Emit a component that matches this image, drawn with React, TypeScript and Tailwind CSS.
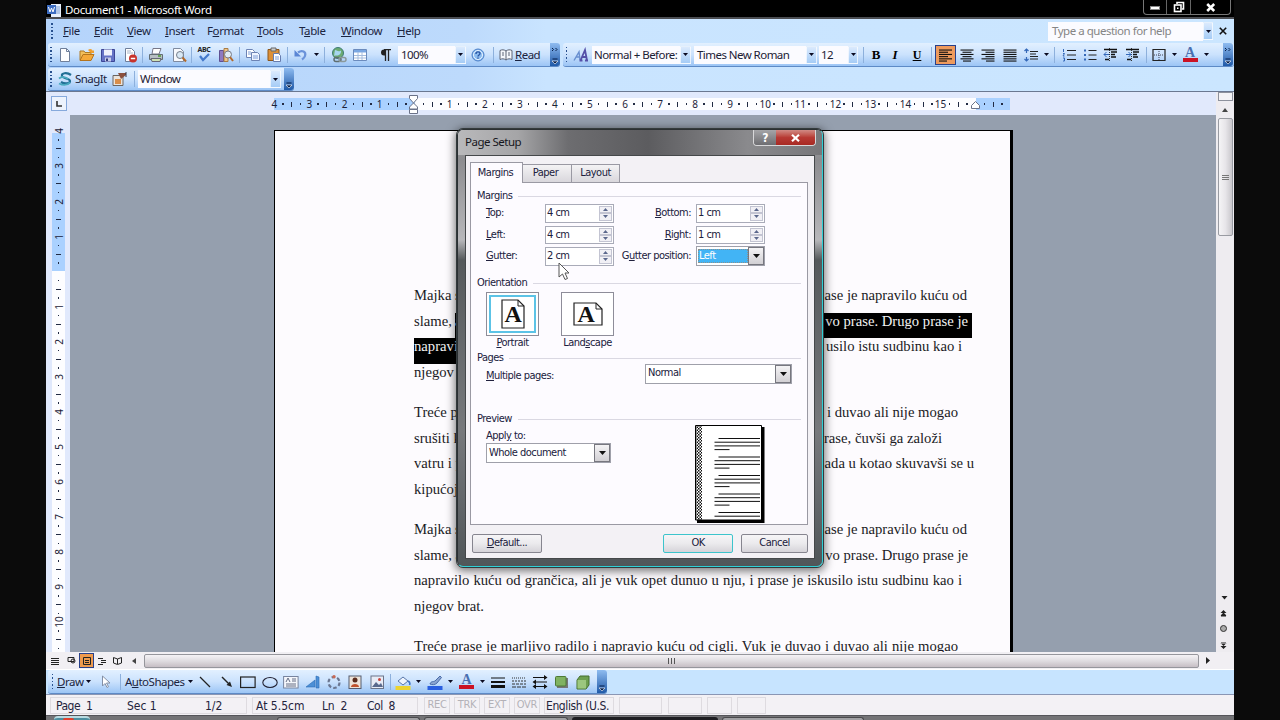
import type { ReactNode } from 'react';

const menus = [
    ['', 'F', 'ile', 'w-[31px]'],
    ['', 'E', 'dit', 'w-[33px]'],
    ['', 'V', 'iew', 'w-[38px]'],
    ['', 'I', 'nsert', 'w-[42px]'],
    ['F', 'o', 'rmat', 'w-[50px]'],
    ['', 'T', 'ools', 'w-[42px]'],
    ['T', 'a', 'ble', 'w-[42px]'],
    ['', 'W', 'indow', 'w-[56px]'],
    ['', 'H', 'elp', 'w-[40px]'],
];

function Cell({ c, children }: { c: string; children?: ReactNode }) {
    return <div className={`flex h-full shrink-0 items-center justify-center ${c}`}>{children}</div>;
}

function Icon({ children }: { children: ReactNode }) {
    return (
        <svg width="16" height="16" viewBox="0 0 16 16" fill="none" className="shrink-0">
            {children}
        </svg>
    );
}

function Sep({ c }: { c: string }) {
    return (
        <Cell c={c}>
            <div className="h-4 w-px bg-[#8db0dc]" />
        </Cell>
    );
}

function Grip({ c }: { c: string }) {
    return (
        <Cell c={c}>
            <div className="flex flex-col gap-[2px]">
                {[0, 1, 2, 3, 4].map((i) => (
                    <div key={i} className="size-[1.5px] bg-[#27508f]" />
                ))}
            </div>
        </Cell>
    );
}

function Down({ c = '' }: { c?: string }) {
    return (
        <Cell c={c}>
            <svg width="5" height="3" viewBox="0 0 5 3">
                <path d="M0 0h5L2.500 3z" fill="#0a0a20" />
            </svg>
        </Cell>
    );
}

function ComboArrow({ c }: { c: string }) {
    return (
        <div className={`flex h-[18px] shrink-0 items-center justify-center border border-white/70 bg-gradient-to-b from-[#dbeafd] to-[#a5ccf6] ${c}`}>
            <svg width="5" height="3" viewBox="0 0 5 3">
                <path d="M0 0h5L2.500 3z" fill="#0a0a20" />
            </svg>
        </div>
    );
}

function Cap({ chevron }: { chevron?: boolean }) {
    return (
        <div className="flex h-full w-[10px] shrink-0 flex-col items-center justify-end rounded-r-[3px] bg-gradient-to-b from-[#8fbcf0] to-[#1f5aa8] pb-[1px]">
            <svg width="8" height="18" viewBox="0 0 8 18" fill="none">
                {chevron && <path d="M1 1l1.500 1.500L1 4M4.500 1L6 2.500 4.500 4" stroke="#061f4a" />}
                <path d="M1.500 12h5" stroke="#061f4a" />
                <path d="M1 14h6l-3 3z" fill="#061f4a" stroke="#fff" strokeWidth=".6" />
            </svg>
        </div>
    );
}

function Lines({ x, w }: { x: number[]; w: number[] }) {
    return (
        <Icon>
            {x.map((v, i) => (
                <rect key={i} x={v} y={2.500 + i * 2.200} width={w[i]} height="1.100" fill="#111" />
            ))}
        </Icon>
    );
}

/* ---------- top bars ---------- */

function TitleBar() {
    return (
        <div className="flex h-[19px] items-start justify-between border-b-2 border-[#4b4d52] bg-black">
            <div className="flex items-center pl-px">
                <svg width="14" height="15" viewBox="0 0 14 15" className="mt-[2px]">
                    <rect x="4" y="1" width="10" height="13" fill="#e8f0fb" />
                    <path d="M7 4h6M7 6h6M7 8h6M7 10h6" stroke="#7d9fd4" />
                    <rect x="0" y="2" width="9" height="9" fill="#3c6cc0" />
                    <path d="M1.500 4l1.500 5 1.500-4L6 9l1.500-5" stroke="#fff" fill="none" />
                </svg>
                <span className="ml-[4px] mt-px text-[11.5px] leading-[17px] tracking-[-0.35px] text-white">Document1 - Microsoft Word</span>
            </div>
            <div className="mr-[3px] flex h-[15px] rounded-b-[4px] border border-t-0 border-[#777] text-white">
                <div className="flex w-[23px] items-end justify-center border-r border-[#666] pb-[4px]">
                    <div className="h-[4px] w-[10px] border border-[#888] bg-white" />
                </div>
                <div className="flex w-[24px] items-center justify-center border-r border-[#666]">
                    <svg width="12" height="12" viewBox="0 0 12 12" fill="none" stroke="#fff" strokeWidth="1.600">
                        <path d="M4 3V1.500h6.500V8H9" />
                        <rect x="1.500" y="4" width="6.500" height="6.500" />
                        <path d="M4 7.300h1.500" />
                    </svg>
                </div>
                <div className="flex w-[39px] items-center justify-center">
                    <svg width="10" height="9" viewBox="0 0 10 9" stroke="#fff" strokeWidth="2.500">
                        <path d="M1.200 1l7 7M8.200 1l-7 7" />
                    </svg>
                </div>
            </div>
        </div>
    );
}

function MenuBar() {
    return (
        <div className="flex h-[24px] items-center pl-[3px]">
            <Grip c="w-[6px] mr-[8px]" />
            {menus.map((m) => (
                <div key={m[1] + m[2]} className={`shrink-0 whitespace-nowrap text-[11.5px] tracking-[-0.4px] text-[#1b2440] ${m[3]}`}>
                    {m[0]}
                    <u className="underline-offset-1">{m[1]}</u>
                    {m[2]}
                </div>
            ))}
            <div className="ml-auto flex h-[19px] w-[155px] items-center bg-[#fbfbff] pl-[4px] text-[11.5px] tracking-[-0.48px] text-[#858585]">Type a question for help</div>
            <ComboArrow c="w-[10px]" />
            <Cell c="w-[20px] mr-px">
                <svg width="8" height="8" viewBox="0 0 8 8" stroke="#111" strokeWidth="1.600">
                    <path d="M.8.8l6.400 6.400M7.200.8L.8 7.200" />
                </svg>
            </Cell>
        </div>
    );
}

const combo = 'flex h-[18px] shrink-0 items-center whitespace-nowrap bg-[#fbfbff] text-[11.5px] tracking-[-0.55px] text-[#1b2034]';

function Toolbars() {
    return (
        <div className="flex h-[25px] items-start gap-[3px] pl-[2px]">
            <div className="flex h-[24px] w-[512px] shrink-0 items-center rounded-[3px] border-b border-[#5d8ac6] bg-gradient-to-b from-[#e2f0ff] via-[#cbe2fd] to-[#9cc5f5]">
                <Grip c="w-[6px]" />
                <Cell c="w-[22px]"><Icon><path d="M3.500 1.500h6l3 3v10h-9z" fill="#fff" stroke="#6f7f9a" /><path d="M9.500 1.500v3h3" stroke="#6f7f9a" /></Icon></Cell>
                <Cell c="w-[21px]"><Icon><path d="M1 13V4h4l1 1.500h6V8" fill="#f3bf5b" stroke="#b07b26" /><path d="M1 13.500L4 7.500h11l-3 6z" fill="#f5a93a" stroke="#b4741d" /><path d="M9 3c2-2 4-1 5 1l1-1v3h-3" fill="#f0a030" /></Icon></Cell>
                <Cell c="w-[22px]"><Icon><path d="M1.500 2.500h13v12h-13z" fill="#6573c6" stroke="#3d4696" /><path d="M4 2.500h8v6H4z" fill="#eef1fc" /><path d="M5 10.500h6v4H5z" fill="#c8cde9" /><path d="M6 11.500h2v2.500H6z" fill="#333e80" /></Icon></Cell>
                <Cell c="w-[22px]"><Icon><path d="M3.500 1.500h6l3 3v10h-9z" fill="#fff" stroke="#6f7f9a" /><path d="M5 4h4M5 6h6" stroke="#a9b5c8" /><circle cx="11" cy="11.500" r="4" fill="#c8322b" /><path d="M8.800 11.500h4.400" stroke="#fff" strokeWidth="1.500" /></Icon></Cell>
                <Sep c="w-[3px]" />
                <Cell c="w-[24px]"><Icon><path d="M5 1.500h8L11 7H4z" fill="#fff" stroke="#778" /><path d="M1.500 7.500h13v5h-13z" fill="#b8c0c4" stroke="#626d72" /><path d="M3 11.500h10l-1 3H4z" fill="#cfe3b5" stroke="#667" /><path d="M10 9h3" stroke="#4c9b32" strokeWidth="1.500" /></Icon></Cell>
                <Cell c="w-[22px]"><Icon><path d="M2.500 1.500h7l3 3v10h-10z" fill="#f7f9fd" stroke="#7f8ba0" /><circle cx="9" cy="8" r="3.500" fill="#d9e8f4" stroke="#767f8c" /><path d="M11.500 10.500l3.500 4" stroke="#b36a2c" strokeWidth="2" /></Icon></Cell>
                <Sep c="w-[3px]" />
                <Cell c="w-[22px]">
                    <div className="flex flex-col items-center">
                        <span className="text-[7px] font-bold leading-[6px] tracking-[-0.3px] text-[#222]">ABC</span>
                        <svg width="12" height="9" viewBox="0 0 12 9" fill="none"><path d="M2 3l3 4 6-6" stroke="#4479cb" strokeWidth="2.200" /></svg>
                    </div>
                </Cell>
                <Cell c="w-[21px]"><Icon><path d="M1.500 3.500h4v11h-4z" fill="#8d79c2" stroke="#5e5093" /><path d="M6 1.500h4v13H6z" fill="#eec48c" stroke="#a87c44" /><circle cx="10" cy="7.500" r="3.500" fill="#dfeaf4" stroke="#777b87" /><path d="M12 10l3 4" stroke="#b36a2c" strokeWidth="2" /></Icon></Cell>
                <Sep c="w-[6px]" />
                <Cell c="w-[21px]"><Icon><path d="M1.500 2.500h6l2 2v6h-8z" fill="#fff" stroke="#6c83b4" /><path d="M6.500 5.500h6l2 2v6h-8z" fill="#eef4ff" stroke="#6c83b4" /><path d="M8 9h5M8 11h5M3 5h3M3 7h3" stroke="#7d9dd8" /></Icon></Cell>
                <Cell c="w-[22px]"><Icon><path d="M2 2.500h11v11H2z" fill="#dc9038" stroke="#8d571b" /><path d="M5 1h5v3H5z" fill="#ccc" stroke="#666" /><path d="M7.500 6.500h5l2 2v6h-7z" fill="#fff" stroke="#667cae" /><path d="M9 10h4M9 12h4" stroke="#7d9dd8" /></Icon></Cell>
                <Sep c="w-[5px]" />
                <Cell c="w-[22px]"><Icon><path d="M5 5.500C9 2.500 13.500 4.500 12 9c-.5 1.500-1.500 2.500-3 3.500" stroke="#6a92da" strokeWidth="2.200" /><path d="M1.500 3v6.500H8z" fill="#5b86d5" /></Icon></Cell>
                <Down c="w-[8px]" />
                <Sep c="w-[8px]" />
                <Cell c="w-[21px]"><Icon><circle cx="7" cy="6" r="5.500" fill="#6cab72" stroke="#3e7c74" /><path d="M4 3c2 0 3 2 5 1s1 3-1 4-4 0-5 1" fill="#a7d6ef" /><rect x="3" y="10.500" width="7" height="4" rx="2" stroke="#5e6d6f" strokeWidth="1.500" /><rect x="8" y="10.500" width="7" height="4" rx="2" stroke="#8b999b" strokeWidth="1.500" /></Icon></Cell>
                <Cell c="w-[22px]"><Icon><path d="M1.500 2.500h13v11h-13z" fill="#fff" stroke="#6b8bbd" /><path d="M2 3h12v2.500H2z" fill="#7aa7e2" /><path d="M2 8.500h12M2 11h12M6 5v8M10 5v8" stroke="#a5bcdd" /></Icon></Cell>
                <Cell c="w-[27px] pl-[3px]"><Icon><path d="M12 2.500H6a3 3 0 000 6h1.500V3" fill="#222" /><path d="M7.500 3v11M10.500 3v11M6 2.600h7" stroke="#222" strokeWidth="1.300" /></Icon></Cell>
                <div className={`${combo} w-[57px] pl-[3px]`}>100%</div>
                <ComboArrow c="w-[11px]" />
                <Cell c="w-[24px]"><Icon><circle cx="8" cy="8" r="6" fill="#8bbcf0" stroke="#4c80c8" /><circle cx="8" cy="8" r="4.500" stroke="#e7f3ff" /><path d="M6 7c0-3 4-2.500 4-.5 0 1.500-2 1.500-2 3M8 10.500v1.200" stroke="#2b57a5" strokeWidth="1.400" /></Icon></Cell>
                <Sep c="w-[6px]" />
                <Cell c="w-[19px]"><Icon><path d="M2 3.500c2-1 4-1 6 .5 2-1.500 4-1.500 6-.5v9c-2-1-4-1-6 .5-2-1.500-4-1.500-6-.5z" fill="#f5f7fb" stroke="#5d6474" /><path d="M8 4v9M4 6h2M4 8h2M10 6h2M10 8h2" stroke="#5d6474" /></Icon></Cell>
                <span className="w-[35px] shrink-0 text-[11.5px] tracking-[-0.5px] text-[#1b2440]"><u className="underline-offset-1">R</u>ead</span>
                <Cap chevron />
            </div>
            <div className="flex h-[24px] flex-1 items-center rounded-[3px] border-b border-[#5d8ac6] bg-gradient-to-b from-[#e2f0ff] via-[#cbe2fd] to-[#9cc5f5]">
                <Grip c="w-[7px]" />
                <Cell c="w-[22px]"><Icon><path d="M1 13.500L6 5l1 8M3 10h4" stroke="#688fd0" strokeWidth="1.400" /><path d="M7.500 13.500L12 3l2 10.500M9 10h5M6.500 13.500h3M12 13.500h3" stroke="#5550a8" strokeWidth="1.800" /></Icon></Cell>
                <div className={`${combo} w-[88px] overflow-hidden pl-[2px]`}>Normal + Before:</div>
                <ComboArrow c="w-[11px] mr-[3px]" />
                <div className={`${combo} w-[112px] pl-[3px]`}>Times New Roman</div>
                <ComboArrow c="w-[11px] mr-[2px]" />
                <div className={`${combo} w-[29px] pl-[2px]`}>12</div>
                <ComboArrow c="w-[10px]" />
                <Sep c="w-[10px]" />
                <Cell c="w-[16px] font-['Liberation_Serif',serif] text-[13px] font-bold">B</Cell>
                <Cell c="w-[22px] font-['Liberation_Serif',serif] text-[13px] font-bold italic">I</Cell>
                <Cell c="w-[22px] font-['Liberation_Serif',serif] text-[12px] font-bold underline">U</Cell>
                <Sep c="w-[7px]" />
                <div className="flex h-[20px] w-[21px] shrink-0 items-center justify-center border border-[#27408b] bg-[#ee9a5d]">
                    <Lines x={[1, 1, 1, 1, 1, 1]} w={[13, 9, 13, 9, 13, 8]} />
                </div>
                <Cell c="w-[21px]"><Lines x={[1.500, 3.500, 1.500, 3.500, 1.500, 4]} w={[13, 9, 13, 9, 13, 8]} /></Cell>
                <Cell c="w-[22px]"><Lines x={[1.500, 5.500, 1.500, 5.500, 1.500, 6]} w={[13, 9, 13, 9, 13, 8.500]} /></Cell>
                <Cell c="w-[21px]"><Lines x={[1.500, 1.500, 1.500, 1.500, 1.500, 1.500]} w={[13, 13, 13, 13, 13, 13]} /></Cell>
                <Cell c="w-[22px]"><Icon><path d="M3.500 2v4M1.500 4l2-2 2 2M3.500 10v4M1.500 12l2 2 2-2" stroke="#3468b8" strokeWidth="1.200" /><path d="M7 4.500h8M7 7h6M7 9.500h8M7 12h8" stroke="#222" strokeWidth="1.100" /></Icon></Cell>
                <Down c="w-[9px]" />
                <Sep c="w-[7px]" />
                <Cell c="w-[21px]"><Icon><path d="M2.500 2v3M2 6.500h1.500L2 9h1.500M2 11h1.500v3H2" stroke="#3468b8" /><path d="M6 3.500h9M6 8h9M6 12.500h9" stroke="#222" strokeWidth="1.200" /></Icon></Cell>
                <Cell c="w-[21px]"><Icon><path d="M2 2.500h2v2H2zM2 7h2v2H2zM2 11.500h2v2H2z" fill="#3468b8" /><path d="M6.500 3.500h8M6.500 8h8M6.500 12.500h8" stroke="#222" strokeWidth="1.200" /></Icon></Cell>
                <Cell c="w-[22px]"><Icon><path d="M1 2.500h13M8 5h6M8 7.500h4M8 10h5M2 12.500h4" stroke="#111" strokeWidth="1.600" /><path d="M6.500 1v14" stroke="#333" strokeDasharray="1 1" /><path d="M1 7.500h5M3.500 5L1 7.500 3.500 10" stroke="#3468b8" /></Icon></Cell>
                <Cell c="w-[22px]"><Icon><path d="M1 2.500h13M8 5h6M8 7.500h4M8 10h5M2 12.500h4" stroke="#111" strokeWidth="1.600" /><path d="M6.500 1v14" stroke="#333" strokeDasharray="1 1" /><path d="M1 7.500h5M3.500 5L6 7.500 3.500 10" stroke="#3468b8" /></Icon></Cell>
                <Sep c="w-[5px]" />
                <Cell c="w-[20px]"><Icon><path d="M2 2.500h12v11H2z" stroke="#222" strokeWidth="1.200" /><path d="M8 4v9M3 8h10" stroke="#445" strokeDasharray="1 1" /></Icon></Cell>
                <Down c="w-[10px]" />
                <Cell c="w-[22px]"><FontColor /></Cell>
                <Down c="w-[10px]" />
                <div className="ml-auto mr-px h-full"><Cap chevron /></div>
            </div>
        </div>
    );
}

function FontColor() {
    return (
        <div className="flex flex-col items-center">
            <span className="font-['Liberation_Serif',serif] text-[14px] font-bold leading-[11px] text-[#4a6fb0]">A</span>
            <div className="h-[4px] w-[15px] bg-[#cb1224]" />
        </div>
    );
}

function SnagitBar() {
    return (
        <div className="flex h-[24px] items-start border-b border-[#6b7891] pl-[2px]">
            <div className="flex h-[23px] w-[246px] items-center rounded-[3px] border-b border-[#5d8ac6] bg-gradient-to-b from-[#e2f0ff] via-[#cbe2fd] to-[#9cc5f5]">
                <Grip c="w-[6px]" />
                <Cell c="w-[21px]"><Icon><path d="M14 4C10 1 4 2 5 5s8 2 8 5-6 3-9 1" stroke="#216f95" strokeWidth="2.200" /><path d="M2 7.500c3-2.500 7-1.500 9 .5M2 12.500c4 2 8 2 11-1" stroke="#49a9be" strokeWidth="1.800" /></Icon></Cell>
                <span className="w-[35px] shrink-0 text-[11.5px] tracking-[-0.55px] text-[#1b2440]">SnagIt</span>
                <Cell c="w-[20px]"><Icon><path d="M1 4.500h10v10H1z" fill="#e9e3dc" stroke="#6a6560" /><path d="M3 8h6v5H3z" fill="#d88d4a" /><path d="M6 2h8v2L9 8z" fill="#8a4f3d" /><path d="M14 1v5" stroke="#334" /></Icon></Cell>
                <Sep c="w-[8px]" />
                <div className={`${combo} w-[132px] pl-[2px]`}>Window</div>
                <ComboArrow c="w-[11px]" />
                <div className="ml-auto h-full"><Cap /></div>
            </div>
        </div>
    );
}

/* ---------- rulers ---------- */

// one mark per quarter of a centimetre
function mark(k: number) {
    if (k === 0 || k === 64) return null;
    const q = Math.abs(k) % 4;
    if (q === 0) return 'num';
    return q === 2 ? 'bar' : 'dot';
}

function RulerCells({ from, to, vertical }: { from: number; to: number; vertical?: boolean }) {
    const ks = Array.from({ length: to - from + 1 }, (_, i) => from + i);
    return (
        <>
            {ks.map((k) => {
                const m = mark(k);
                return (
                    <div key={k} className={vertical ? 'flex h-[8.78px] w-full shrink-0 items-center justify-center' : 'flex h-full w-[8.77px] shrink-0 items-center justify-center'}>
                        {m === 'num' && <span className={vertical ? 'block -rotate-90 text-[10px] leading-[10px]' : 'text-[10px] leading-[12px]'}>{Math.abs(k) / 4}</span>}
                        {m === 'bar' && <div className={vertical ? 'h-px w-[5px] bg-[#222b44]' : 'h-[5px] w-px bg-[#222b44]'} />}
                        {m === 'dot' && <div className="size-[1.5px] bg-[#222b44]" />}
                    </div>
                );
            })}
        </>
    );
}

function HRuler() {
    return (
        <div className="flex h-[23px] items-start bg-[#e1e9fc] pl-[5px] text-[#1c2238]">
            <div className="mt-[4px] flex h-[15px] w-[16px] shrink-0 items-center justify-center border border-[#86a9dc] bg-[#edf3fd]">
                <svg width="6" height="6" viewBox="0 0 6 6" fill="none"><path d="M1 0v5h5" stroke="#333" strokeWidth="1.600" /></svg>
            </div>
            <div className="ml-[207px] mt-[6px] flex h-[12px] w-[736px] shrink-0 bg-[linear-gradient(90deg,#aad1ff_0_141px,#fdfdff_141px_702px,#aad1ff_702px)]">
                <div className="relative -ml-[4px] flex">
                    <RulerCells from={-16} to={67} />
                    <svg width="9" height="20" viewBox="0 0 9 20" className="absolute left-[139px] top-[-3px]" fill="#fff" stroke="#6a7288">
                        <path d="M.5.5h8v3l-4 4.500-4-4.500zM4.500 8l4 4v2h-8v-2zM.5 14.500h8v4h-8z" />
                    </svg>
                    <svg width="9" height="8" viewBox="0 0 9 8" className="absolute left-[701px] top-[3px]" fill="#fff" stroke="#6a7288">
                        <path d="M4.500.5l4 4v3h-8v-3z" />
                    </svg>
                </div>
            </div>
        </div>
    );
}

function VRuler() {
    return (
        <div className="flex h-[537px] w-[24px] shrink-0 flex-col overflow-hidden bg-[#e1e9fc] pl-[6px] pt-[12px] text-[#1c2238]">
            <div className="flex w-[13px] flex-1 flex-col bg-[linear-gradient(180deg,transparent_0_6px,#aad1ff_6px_144px,#fdfdff_144px)]">
                <RulerCells from={-16} to={43} vertical />
            </div>
        </div>
    );
}

/* ---------- document ---------- */

function Line({ w, l, r }: { w: string; l: ReactNode; r?: string }) {
    return (
        <div className={`flex h-[25.6px] justify-between whitespace-nowrap leading-[17px] ${w}`}>
            <span>{l}</span>
            {r && <span>{r}</span>}
        </div>
    );
}

function Page() {
    return (
        <div className="ml-[204px] mt-[15px] flex h-[522px] w-[739px] flex-col overflow-hidden border-l border-r-[3px] border-t border-black bg-[#fdfbfe] pl-[139px] pt-[156px] font-['Liberation_Serif',serif] text-[14.67px] text-[#1a1a24]">
            <div className="mb-[14.7px]">
                <Line w="w-[553px]" l="Majka s" r="ase je napravilo kuću od" />
                <div className="flex h-[25.6px] w-[558px] leading-[17px]">
                    <span className="w-[41px] shrink-0">slame,</span>
                    <span className="flex flex-1 justify-between bg-black pr-[4px] text-[#f3f3f3]">
                        <span>a</span>
                        <span>vo prase. Drugo prase je</span>
                    </span>
                </div>
                <div className="flex h-[25.6px] w-[548px] justify-between whitespace-nowrap leading-[17px]">
                    <span className="h-full bg-black text-[#f3f3f3]">napravilo</span>
                    <span>usilo istu sudbinu kao i</span>
                </div>
                <Line w="w-[553px]" l="njegov brat." />
            </div>
            <div className="mb-[14.7px]">
                <Line w="w-[544px]" l="Treće p" r="i duvao ali nije mogao" />
                <Line w="w-[528px]" l="srušiti k" r="rase, čuvši ga založi" />
                <Line w="w-[560px]" l="vatru i p" r="ada u kotao skuvavši se u" />
                <Line w="w-[553px]" l="kipućoj" />
            </div>
            <div className="mb-[14.7px]">
                <Line w="w-[553px]" l="Majka s" r="ase je napravilo kuću od" />
                <Line w="w-[554px]" l="slame, a" r="vo prase. Drugo prase je" />
                <div className="h-[25.6px] w-[548px] whitespace-nowrap leading-[17px] [text-align-last:justify]">
                    napravilo kuću od grančica, ali je vuk opet dunuo u nju, i prase je iskusilo istu sudbinu kao i
                </div>
                <Line w="w-[553px]" l="njegov brat." />
            </div>
            <div className="h-[25.6px] w-[544px] shrink-0 whitespace-nowrap leading-[17px] [text-align-last:justify]">
                Treće prase je marljivo radilo i napravio kuću od cigli. Vuk je duvao i duvao ali nije mogao
            </div>
        </div>
    );
}

function VScroll() {
    return (
        <div className="flex w-[18px] shrink-0 flex-col items-center bg-[#eeecf0]">
            <div className="h-[9px] w-[15px] border border-[#8d919c] bg-[#f4f3f6]" />
            <div className="flex h-[17px] items-center">
                <svg width="6" height="4" viewBox="0 0 6 4"><path d="M0 4h6L3 0z" fill="#444" /></svg>
            </div>
            <div className="flex h-[118px] w-[15px] flex-col items-center justify-center gap-px rounded-[2px] border border-[#999ba2] bg-gradient-to-r from-[#f5f4f6] via-[#e7e5e9] to-[#c9c7cc]">
                <div className="h-px w-[7px] bg-[#777]" />
                <div className="h-px w-[7px] bg-[#777]" />
                <div className="h-px w-[7px] bg-[#777]" />
            </div>
            <svg width="18" height="62" viewBox="0 0 18 62" className="mt-auto" fill="#222">
                <path d="M5.500 6h6l-3 3.500z" />
                <path d="M4.500 23l3-3 3 3zM4.500 25.500l3-3 3 3zM5 25h5v1.500H5z" />
                <circle cx="7.500" cy="38.500" r="3" fill="#aaa" stroke="#333" />
                <path d="M4.500 53l3 3 3-3zM4.500 56l3 3 3-3zM5 52.500h5v1H5z" />
            </svg>
        </div>
    );
}

function HScroll() {
    return (
        <div className="flex h-[17px] shrink-0 items-center bg-[#f1eff3]">
            <Cell c="w-[17px]"><svg width="8" height="8" viewBox="0 0 8 8" stroke="#222"><path d="M0 1.500h8M0 3.500h8M0 5.500h8M0 7.500h8" /></svg></Cell>
            <Cell c="w-[16px]"><svg width="9" height="9" viewBox="0 0 9 9" fill="none" stroke="#222"><path d="M1 1.500h6v4H1zM4 5a2 2 0 104 0 2 2 0 10-4 0" /></svg></Cell>
            <div className="flex size-[15px] shrink-0 items-center justify-center border border-[#27408b] bg-[#ee9a4d]">
                <svg width="8" height="8" viewBox="0 0 8 8" fill="none" stroke="#222"><path d="M.5.5h7v7h-7zM2 3.500h4M2 5.500h4" /></svg>
            </div>
            <Cell c="w-[16px]"><svg width="8" height="8" viewBox="0 0 8 8" stroke="#222"><path d="M0 1.500h5M3 3.500h5M3 5.500h5M0 7.500h5" /></svg></Cell>
            <Cell c="w-[15px]"><svg width="9" height="8" viewBox="0 0 9 8" fill="none" stroke="#222"><path d="M.5.5L4.500 2l4-1.500V6L4.500 7.500.5 6zM4.500 2v5" /></svg></Cell>
            <Cell c="w-[17px]"><svg width="4" height="6" viewBox="0 0 4 6"><path d="M4 0v6L0 3z" fill="#444" /></svg></Cell>
            <div className="ml-[2px] flex h-[14px] w-[1055px] items-center justify-center gap-px rounded-[2px] border border-[#96969c] bg-gradient-to-b from-[#f5f3f6] via-[#dfdce0] to-[#c6bec4]">
                <div className="h-[6px] w-px bg-[#555]" />
                <div className="ml-px h-[6px] w-px bg-[#555]" />
                <div className="ml-px h-[6px] w-px bg-[#555]" />
            </div>
            <Cell c="w-[18px]"><svg width="4" height="7" viewBox="0 0 4 7"><path d="M0 0v7l4-3.500z" fill="#222" /></svg></Cell>
        </div>
    );
}

/* ---------- bottom bars ---------- */

function DrawBar() {
    return (
        <div className="flex h-[26px] shrink-0 items-start border-b border-t border-b-[#8a96b4] border-t-white bg-[#c7e4ff] pl-[2px]">
            <div className="flex h-[24px] w-[559px] items-center rounded-[3px] border-b border-[#5d8ac6] bg-gradient-to-b from-[#e2f0ff] via-[#cbe2fd] to-[#9cc5f5] text-[11.5px] text-[#1b2440]">
                <Grip c="w-[9px]" />
                <span className="w-[27px] shrink-0 tracking-[-0.5px]"><u className="underline-offset-1">D</u>raw</span>
                <Down c="w-[8px]" />
                <Cell c="w-[26px]"><Icon><path d="M5.500 2v10l2.500-2.500 2 4 1.500-.8-2-3.700H13z" fill="#fff" stroke="#8490a6" /></Icon></Cell>
                <Sep c="w-[4px]" />
                <span className="w-[64px] shrink-0 pl-[3px] tracking-[-0.5px]">A<u className="underline-offset-1">u</u>toShapes</span>
                <Down c="w-[8px]" />
                <Cell c="w-[22px]"><Icon><path d="M3 3l10 10" stroke="#222" strokeWidth="1.200" /></Icon></Cell>
                <Cell c="w-[21px]"><Icon><path d="M3 3l8 8" stroke="#222" strokeWidth="1.500" /><path d="M13 13L7.500 11 11 7.500z" fill="#222" /></Icon></Cell>
                <Cell c="w-[22px]"><Icon><rect x=".6" y="3" width="14.500" height="10.500" stroke="#222" strokeWidth="1.200" /></Icon></Cell>
                <Cell c="w-[21px]"><Icon><ellipse cx="8" cy="8.500" rx="7.200" ry="5" stroke="#223" strokeWidth="1.100" /></Icon></Cell>
                <Cell c="w-[22px]"><Icon><rect x=".6" y="2.500" width="14.500" height="11.500" fill="#f4f6fb" stroke="#77849e" /><path d="M3 8l2-4 2 4M9 5h4M9 7h4M3 10h10M3 12h10" stroke="#666e85" /></Icon></Cell>
                <Cell c="w-[21px]"><Icon><path d="M1 13L10 6v7zM11 2l3 1v11h-3z" fill="#4c8fd6" stroke="#2c6cb6" strokeWidth=".6" /></Icon></Cell>
                <Cell c="w-[21px]"><Icon><circle cx="8" cy="8.500" r="5.500" stroke="#6a7691" strokeWidth="2.200" strokeDasharray="3.500 2.200" /><circle cx="8" cy="2.800" r="1.700" fill="#c66a56" /></Icon></Cell>
                <Cell c="w-[22px]"><Icon><rect x="2" y="2" width="12" height="12.500" fill="#eee4da" stroke="#555c6e" /><circle cx="8" cy="6" r="2.500" fill="#5c2e1f" /><path d="M4 13c0-4 8-4 8 0z" fill="#c0532d" /></Icon></Cell>
                <Cell c="w-[21px]"><Icon><rect x="2" y="2" width="12.500" height="12.500" fill="#e8ecf6" stroke="#6b7489" /><path d="M3 13l4-5 3 3 2-2 2 4z" fill="#59698c" /><circle cx="10.500" cy="5.500" r="1.500" fill="#c9453e" /></Icon></Cell>
                <Sep c="w-[6px]" />
                <Cell c="w-[20px]"><Icon><path d="M3 7l5-4 5 4-5 4z" fill="#eef4fd" stroke="#5876a8" /><path d="M13 7c2 1 2 3 1.500 4" stroke="#3f74c5" strokeWidth="1.500" /><rect x=".5" y="12" width="15" height="4" fill="#ecd32f" /></Icon></Cell>
                <Down c="w-[10px]" />
                <Cell c="w-[24px]"><Icon><path d="M3 10c1-3 3-2 5-3l5-5 1.500 1.500L10 9c-2 2-5 2-7 1z" fill="#8aa4d0" stroke="#4a6ba8" /><rect x=".5" y="12" width="15" height="4" fill="#2a5fe0" /></Icon></Cell>
                <Down c="w-[7px]" />
                <Cell c="w-[25px]"><FontColor /></Cell>
                <Down c="w-[7px]" />
                <Cell c="w-[24px]"><Icon><path d="M1 4h14" stroke="#111" /><path d="M1 8h14" stroke="#111" strokeWidth="2" /><path d="M1 12.500h14" stroke="#111" strokeWidth="3" /></Icon></Cell>
                <Cell c="w-[18px]"><Icon><path d="M1 4h14" stroke="#333" strokeDasharray="1 1" /><path d="M1 7h14" stroke="#333" strokeDasharray="2 1" /><path d="M1 10h14" stroke="#333" strokeDasharray="3 1" /><path d="M1 13h14" stroke="#333" strokeDasharray="4 1" /></Icon></Cell>
                <Cell c="w-[24px]"><Icon><path d="M1 3.500h12M3 8h12M2 12.500h12" stroke="#111" strokeWidth="1.200" /><path d="M12 1l3.500 2.500L12 6zM4 5.500L.5 8 4 10.500zM4 10L.5 12.500 4 15zM12 10l3.500 2.500L12 15z" fill="#111" /></Icon></Cell>
                <Cell c="w-[19px]"><Icon><rect x="3" y="4" width="11" height="10" fill="#777" /><rect x="1.500" y="2.500" width="10.500" height="9.500" rx="1" fill="#80b262" stroke="#4d7a35" /></Icon></Cell>
                <Cell c="w-[24px]"><Icon><path d="M2 6l3-4h9v9l-3 4H2z" fill="#6d9f50" stroke="#456f2f" /><path d="M2.500 6H11v8.500H2.500z" fill="#9cc77f" /></Icon></Cell>
                <div className="ml-auto h-full"><Cap /></div>
            </div>
        </div>
    );
}

function StatusBar() {
    const panel = 'flex h-[17px] shrink-0 items-center border border-[#dedbe0]';
    const flags = ['REC', 'TRK', 'EXT', 'OVR'];
    return (
        <div className="flex h-[20px] shrink-0 items-center bg-[#f3f1f5] pl-[4px] pt-px font-['DejaVu_Sans_Condensed','DejaVu_Sans',sans-serif] text-[12px] text-[#23233c]">
            <div className={`${panel} mr-[5px] w-[197px] pl-[5px]`}>
                <span className="w-[71px] tracking-[-0.5px]">Page&nbsp; 1</span>
                <span className="w-[78px]">Sec 1</span>
                <span>1/2</span>
            </div>
            <div className={`${panel} mr-[6px] w-[166px] pl-[3px]`}>
                <span className="w-[66px]">At 5.5cm</span>
                <span className="w-[45px] tracking-[-0.3px]">Ln&nbsp; 2</span>
                <span className="tracking-[-0.5px]">Col&nbsp; 8</span>
            </div>
            {flags.map((f) => (
                <div key={f} className={`${panel} mr-[4px] w-[26px] justify-center text-[11px] tracking-[-0.3px] text-[#b3b1b8]`}>{f}</div>
            ))}
            <div className={`${panel} mr-[5px] w-[70px] whitespace-nowrap pl-px tracking-[-0.4px]`}>English (U.S.</div>
            <div className={`${panel} mr-[6px] w-[43px]`} />
            <div className={`${panel} mr-[5px] w-[34px]`} />
            <div className={`${panel} mr-[5px] w-[25px]`} />
            <div className={`${panel} w-[29px]`} />
        </div>
    );
}

function Taskbar() {
    return (
        <div className="flex h-[5px] shrink-0 items-end overflow-hidden border-t border-[#55555a] bg-[#737376]">
            <div className="ml-[8px] h-[4px] w-[36px] rounded-t-[18px] border-t-2 border-[#b9dbe2] bg-[#4c8fa0] px-[9px]">
                <div className="h-full w-[11px] rounded-t-full bg-[#e2402c]" />
            </div>
            <div className="ml-[187px] flex gap-[4px]">
                <div className="h-[3px] w-[143px] rounded-t-[3px] border border-b-0 border-[#4a4a4d] bg-[#a1a1a4]" />
                <div className="h-[3px] w-[144px] rounded-t-[3px] border border-b-0 border-[#4a4a4d] bg-[#a1a1a4]" />
                <div className="h-[3px] w-[146px] rounded-t-[3px] bg-[#1e1e22]" />
                <div className="h-[3px] w-[142px] rounded-t-[3px] border border-b-0 border-[#4a4a4d] bg-[#a1a1a4]" />
            </div>
        </div>
    );
}

/* ---------- page setup dialog ---------- */

function Group({ c, label }: { c: string; label: string }) {
    return (
        <div className={`flex h-[14px] shrink-0 items-center gap-[6px] pr-[6px] ${c}`}>
            <span>{label}</span>
            <div className="h-px flex-1 bg-[#dad8e2]" />
        </div>
    );
}

function Spin({ value }: { value: string }) {
    return (
        <div className="flex h-[18.5px] w-[69px] shrink-0 items-center border border-[#a9abb8] bg-white pl-[1px]">
            <span className="flex-1">{value}</span>
            <div className="flex h-full w-[15px] flex-col p-px">
                <div className="flex flex-1 items-center justify-center border border-[#c3c4d2] bg-[#f1f0f5]">
                    <svg width="5" height="3" viewBox="0 0 5 3"><path d="M0 3h5L2.500 0z" fill="#5b678c" /></svg>
                </div>
                <div className="flex flex-1 items-center justify-center border border-[#c3c4d2] bg-[#f1f0f5]">
                    <svg width="5" height="3" viewBox="0 0 5 3"><path d="M0 0h5L2.500 3z" fill="#5b678c" /></svg>
                </div>
            </div>
        </div>
    );
}

function Select({ c, children }: { c: string; children: ReactNode }) {
    return (
        <div className={`flex h-[20px] shrink-0 items-center border border-[#9fa0aa] bg-white ${c}`}>
            {children}
            <div className="ml-auto flex h-full w-[16px] items-center justify-center border border-[#77777f] bg-gradient-to-b from-[#f4f3f5] to-[#d2d0d4]">
                <svg width="7" height="4" viewBox="0 0 7 4"><path d="M0 0h7L3.500 4z" fill="#111" /></svg>
            </div>
        </div>
    );
}

function PaperIcon({ wide }: { wide?: boolean }) {
    return (
        <svg width={wide ? 30 : 24} height={wide ? 24 : 30} viewBox={wide ? '0 0 30 24' : '0 0 24 30'} fill="none">
            <path d={wide ? 'M1 1h22l6 6v16H1z' : 'M1 1h16l6 6v22H1z'} fill="#fff" stroke="#222" strokeWidth="1.200" />
            <path d={wide ? 'M23 1v6h6' : 'M17 1v6h6'} stroke="#222" />
            <text x={wide ? 13 : 12} y={wide ? 19.500 : 22.500} textAnchor="middle" fontFamily="Liberation Serif, serif" fontWeight="bold" fontSize="24" fill="#111">A</text>
        </svg>
    );
}

// left end and width of the four text lines of one preview paragraph
const previewLines = [
    [23.500, 41.500], [19.500, 45.500], [19.500, 45.500], [19.500, 15],
];

function Preview() {
    return (
        <svg width="70" height="98" viewBox="0 0 70 98" className="-ml-px mr-[42px] shrink-0">
            <defs>
                <pattern id="gutter" width="3" height="3" patternUnits="userSpaceOnUse">
                    <rect width="1.500" height="1.500" fill="#111" />
                    <rect x="1.500" y="1.500" width="1.500" height="1.500" fill="#111" />
                </pattern>
            </defs>
            <path d="M2 2h67.500v96H2z" fill="#000" />
            <path d="M.5.5h66v94.500H.5z" fill="#fff" stroke="#000" />
            <rect x="1" y="1" width="6" height="94" fill="url(#gutter)" />
            {[0, 1, 2, 3, 4].map((g) =>
                previewLines.map(([x, w], i) => {
                    const y = 13 + g * 18.500 + i * 3.700;
                    return y < 93 ? <rect key={g + '-' + i} x={x} y={y} width={w} height="1" fill="#111" /> : null;
                })
            )}
        </svg>
    );
}

function DialogButton({ c, children }: { c: string; children: ReactNode }) {
    return <div className={`flex h-[18.5px] shrink-0 items-center justify-center rounded-[2px] border bg-gradient-to-b from-[#f6f5f7] via-[#ebeaed] to-[#d6d4d9] ${c}`}>{children}</div>;
}

function PageSetup() {
    const label = 'w-[59px] shrink-0';
    return (
        <div className="absolute left-[457px] top-[129px] flex h-[438px] w-[366px] flex-col rounded-[6px] border border-[#2b3033] border-b-[#2fd0d6] border-r-[#2fd0d6] bg-[linear-gradient(180deg,#a9a9ac_0,#8d8d90_30px,#b7b7ba_110px,#55595b_130px,#77797c_300px,#505659_100%)] px-[7px] pb-[7px] font-['DejaVu_Sans_Condensed','DejaVu_Sans',sans-serif] text-[11px] tracking-[-0.52px] text-[#20203c] shadow-[0_2px_10px_2px_rgba(0,0,0,0.55)] outline outline-1 outline-[#333a3c]">
            <div className="-mx-[7px] flex h-[25px] shrink-0 items-start justify-between rounded-t-[5px] bg-[linear-gradient(90deg,#b9b9bb_0,#a5a5a7_60px,#6d6d70_110px,#5c5c5f_190px,#8a8a8d_290px,#77777a_100%)]">
                <span className="pl-[7px] pt-[3px] font-['Noto_Sans',sans-serif] text-[11.5px] leading-[18px] tracking-[-0.5px] text-[#16161c]">Page Setup</span>
                <div className="mr-[6px] flex h-[16px] overflow-hidden rounded-b-[4px] border border-t-0 border-[#d8d8da]">
                    <div className="flex w-[22px] items-center justify-center bg-gradient-to-b from-[#a5a5a8] to-[#6e6e72] text-[12px] font-bold text-white">?</div>
                    <div className="flex w-[39px] items-center justify-center bg-gradient-to-b from-[#d08a85] via-[#b73a34] to-[#a82923]">
                        <svg width="9" height="8" viewBox="0 0 9 8" stroke="#fff" strokeWidth="2.200"><path d="M1 .8l7 6.400M8 .8L1 7.200" /></svg>
                    </div>
                </div>
            </div>
            <div className="flex flex-1 flex-col border border-[#45484a] bg-[#f3f1f5] pl-[4px] pr-[6px] pt-[6px]">
                <div className="flex h-[20px] shrink-0 items-end">
                    <div className="relative z-10 -mb-px flex h-[21px] w-[53px] items-center justify-center border border-b-0 border-[#9a99a3] bg-[#fdfbff] pr-[2px]">Margins</div>
                    <div className="flex h-[18px] w-[49px] items-center justify-center border border-b-0 border-l-0 border-[#9a99a3] bg-gradient-to-b from-[#f4f3f5] to-[#d9d7dc] pr-[3px]">Paper</div>
                    <div className="flex h-[18px] w-[48px] items-center justify-center border border-b-0 border-l-0 border-[#9a99a3] bg-gradient-to-b from-[#f4f3f5] to-[#d9d7dc]">Layout</div>
                </div>
                <div className="flex h-[343px] shrink-0 flex-col border border-[#9a99a3] bg-[#fdfbff] pl-[6px]">
                    <Group c="mt-[6px]" label="Margins" />
                    <div className="flex flex-col gap-[3px] pl-[9px] pt-[1px]">
                        <div className="flex h-[18.5px] items-center">
                            <span className={label}><u>T</u>op:</span>
                            <Spin value="4 cm" />
                            <span className="w-[82px] pr-[5px] text-right"><u>B</u>ottom:</span>
                            <Spin value="1 cm" />
                        </div>
                        <div className="flex h-[18.5px] items-center">
                            <span className={label}><u>L</u>eft:</span>
                            <Spin value="4 cm" />
                            <span className="w-[82px] pr-[5px] text-right"><u>R</u>ight:</span>
                            <Spin value="1 cm" />
                        </div>
                        <div className="flex h-[18.5px] items-center">
                            <span className={label}><u>G</u>utter:</span>
                            <Spin value="2 cm" />
                            <span className="w-[82px] whitespace-nowrap pr-[5px] text-right">G<u>u</u>tter position:</span>
                            <Select c="w-[69px]">
                                <span className="ml-px flex h-[14px] w-[50px] items-center border border-dotted border-[#8c8f8c] bg-[#42b4f5] text-white">Left</span>
                            </Select>
                        </div>
                    </div>
                    <Group c="mt-[11px]" label="Orientation" />
                    <div className="flex gap-[22px] pl-[9px] pt-[1px] leading-[14px]">
                        <div className="flex w-[53px] flex-col items-center">
                            <div className="flex h-[44px] w-[53px] items-center justify-center border border-[#8e8d99] bg-white p-[2px]">
                                <div className="flex h-full w-full items-center justify-center border-2 border-[#5cc3e6]"><PaperIcon /></div>
                            </div>
                            <span><u>P</u>ortrait</span>
                        </div>
                        <div className="flex w-[53px] flex-col items-center">
                            <div className="flex h-[44px] w-[53px] items-center justify-center border border-[#8e8d99] bg-white"><PaperIcon wide /></div>
                            <span className="whitespace-nowrap">Land<u>s</u>cape</span>
                        </div>
                    </div>
                    <Group c="mt-[2px]" label="Pages" />
                    <div className="-mt-[2px] flex items-start justify-between pl-[9px] pr-[15px]">
                        <span className="pt-[4px]"><u>M</u>ultiple pages:</span>
                        <Select c="w-[147px] pl-[2px]"><span>Normal</span></Select>
                    </div>
                    <Group c="mt-[28px]" label="Preview" />
                    <div className="-mt-[1px] flex items-start justify-between pl-[9px]">
                        <div className="flex flex-col pt-[3px]">
                            <span className="leading-[15px]">Appl<u>y</u> to:</span>
                            <Select c="w-[125px] pl-[2px]"><span>Whole document</span></Select>
                        </div>
                        <Preview />
                    </div>
                </div>
                <div className="flex pt-[9px]">
                    <DialogButton c="ml-[2px] w-[70px] border-[#86858f]"><span><u>D</u>efault...</span></DialogButton>
                    <DialogButton c="ml-auto w-[70px] border-[#3cc4cc]">OK</DialogButton>
                    <DialogButton c="ml-[8px] w-[67px] border-[#86858f]">Cancel</DialogButton>
                </div>
            </div>
        </div>
    );
}

export default function App() {
    return (
        <div className="relative flex h-[720px] w-[1280px] overflow-hidden bg-[#0b0b0b] font-['Noto_Sans','Open_Sans',sans-serif]">
            <div className="ml-[46px] flex w-[1188px] flex-col bg-black">
                <TitleBar />
                <div className="bg-[linear-gradient(90deg,#b5d4fb_0,#bddafc_420px,#c9e4ff_500px,#cbe6ff_100%)]">
                    <MenuBar />
                    <Toolbars />
                    <SnagitBar />
                </div>
                <div className="flex h-[560px] shrink-0 bg-[#959fae]">
                    <div className="flex w-[1170px] flex-col">
                        <HRuler />
                        <div className="flex h-[537px] overflow-hidden">
                            <VRuler />
                            <Page />
                        </div>
                    </div>
                    <VScroll />
                </div>
                <HScroll />
                <DrawBar />
                <StatusBar />
                <Taskbar />
            </div>
            <PageSetup />
            <svg width="12" height="19" viewBox="0 0 12 19" className="absolute left-[558px] top-[262px]">
                <path d="M1 1v14l3.500-3 2.500 5.500 2.500-1-2.500-5.500h4z" fill="#fff" stroke="#555" />
            </svg>
        </div>
    );
}
